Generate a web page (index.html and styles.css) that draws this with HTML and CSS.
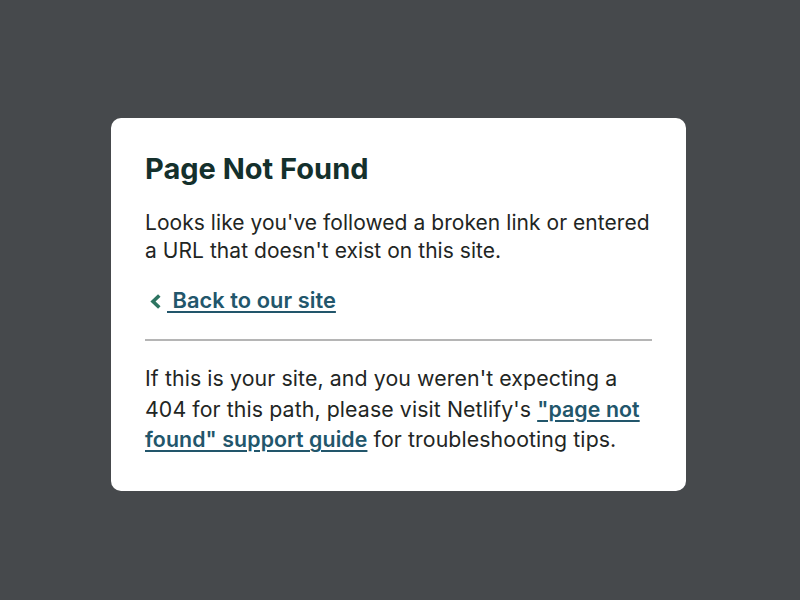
FILE: index.html
```html
<!DOCTYPE html>
<html lang="en">
<head>
  <meta charset="UTF-8" />
  <meta name="viewport" content="width=device-width, initial-scale=1.0"/>
  <title>Page Not Found</title>
  <link rel="stylesheet" href="styles.css">
</head>
<body>
  <div class="main">
    <div class="card">
      <h1>Page Not Found</h1>
      <p>Looks like you've followed a broken link or entered a URL that doesn't exist on this site.</p>
      <p class="back">
        <a href="#"><svg class="chevron" width="11" height="15" viewBox="0 0 11 15"><path d="M9.3 1.5 L3 7.5 L9.3 13.5" fill="none" stroke="#2d7461" stroke-width="3.6" stroke-linejoin="miter"/></svg> Back to our site</a>
      </p>
      <hr class="divider" />
      <p class="help">If this is your site, and you weren't expecting a 404 for this path, please visit Netlify's <a href="#">"page not found" support guide</a> for troubleshooting tips.</p>
    </div>
  </div>
</body>
</html>
```

FILE: styles.css
```css
* {
  box-sizing: border-box;
}

body {
  margin: 0;
  font-family: Inter, 'Noto Sans', sans-serif;
  background: #46494c;
  color: #1f2624;
}

.main {
  display: flex;
  justify-content: center;
  align-items: center;
  height: 100vh;
  padding: 9px 3px 0 0;
}

.card {
  width: 575px;
  padding: 34px 34px 36px;
  background: #fff;
  border-radius: 10px;
}

h1 {
  margin: 0;
  font-size: 29px;
  line-height: 34px;
  font-weight: 700;
  color: #14302c;
}

p {
  margin: 23px 0 0;
  font-size: 21px;
  line-height: 28px;
  letter-spacing: 0.05px;
}

a {
  color: #22566b;
  font-weight: 600;
  text-decoration: underline;
  text-underline-offset: 3px;
}

.back {
  margin-top: 21px;
  font-size: 21.8px;
}

.chevron {
  margin: 0 6px 0 5px;
  position: relative;
  top: 1px;
}

.divider {
  margin: 25px 0 0;
  border: none;
  border-top: 2px solid #b5b5b5;
}

.help {
  margin-top: 22px;
  line-height: 30.5px;
  font-size: 21.3px;
  letter-spacing: 0.1px;
}
```
